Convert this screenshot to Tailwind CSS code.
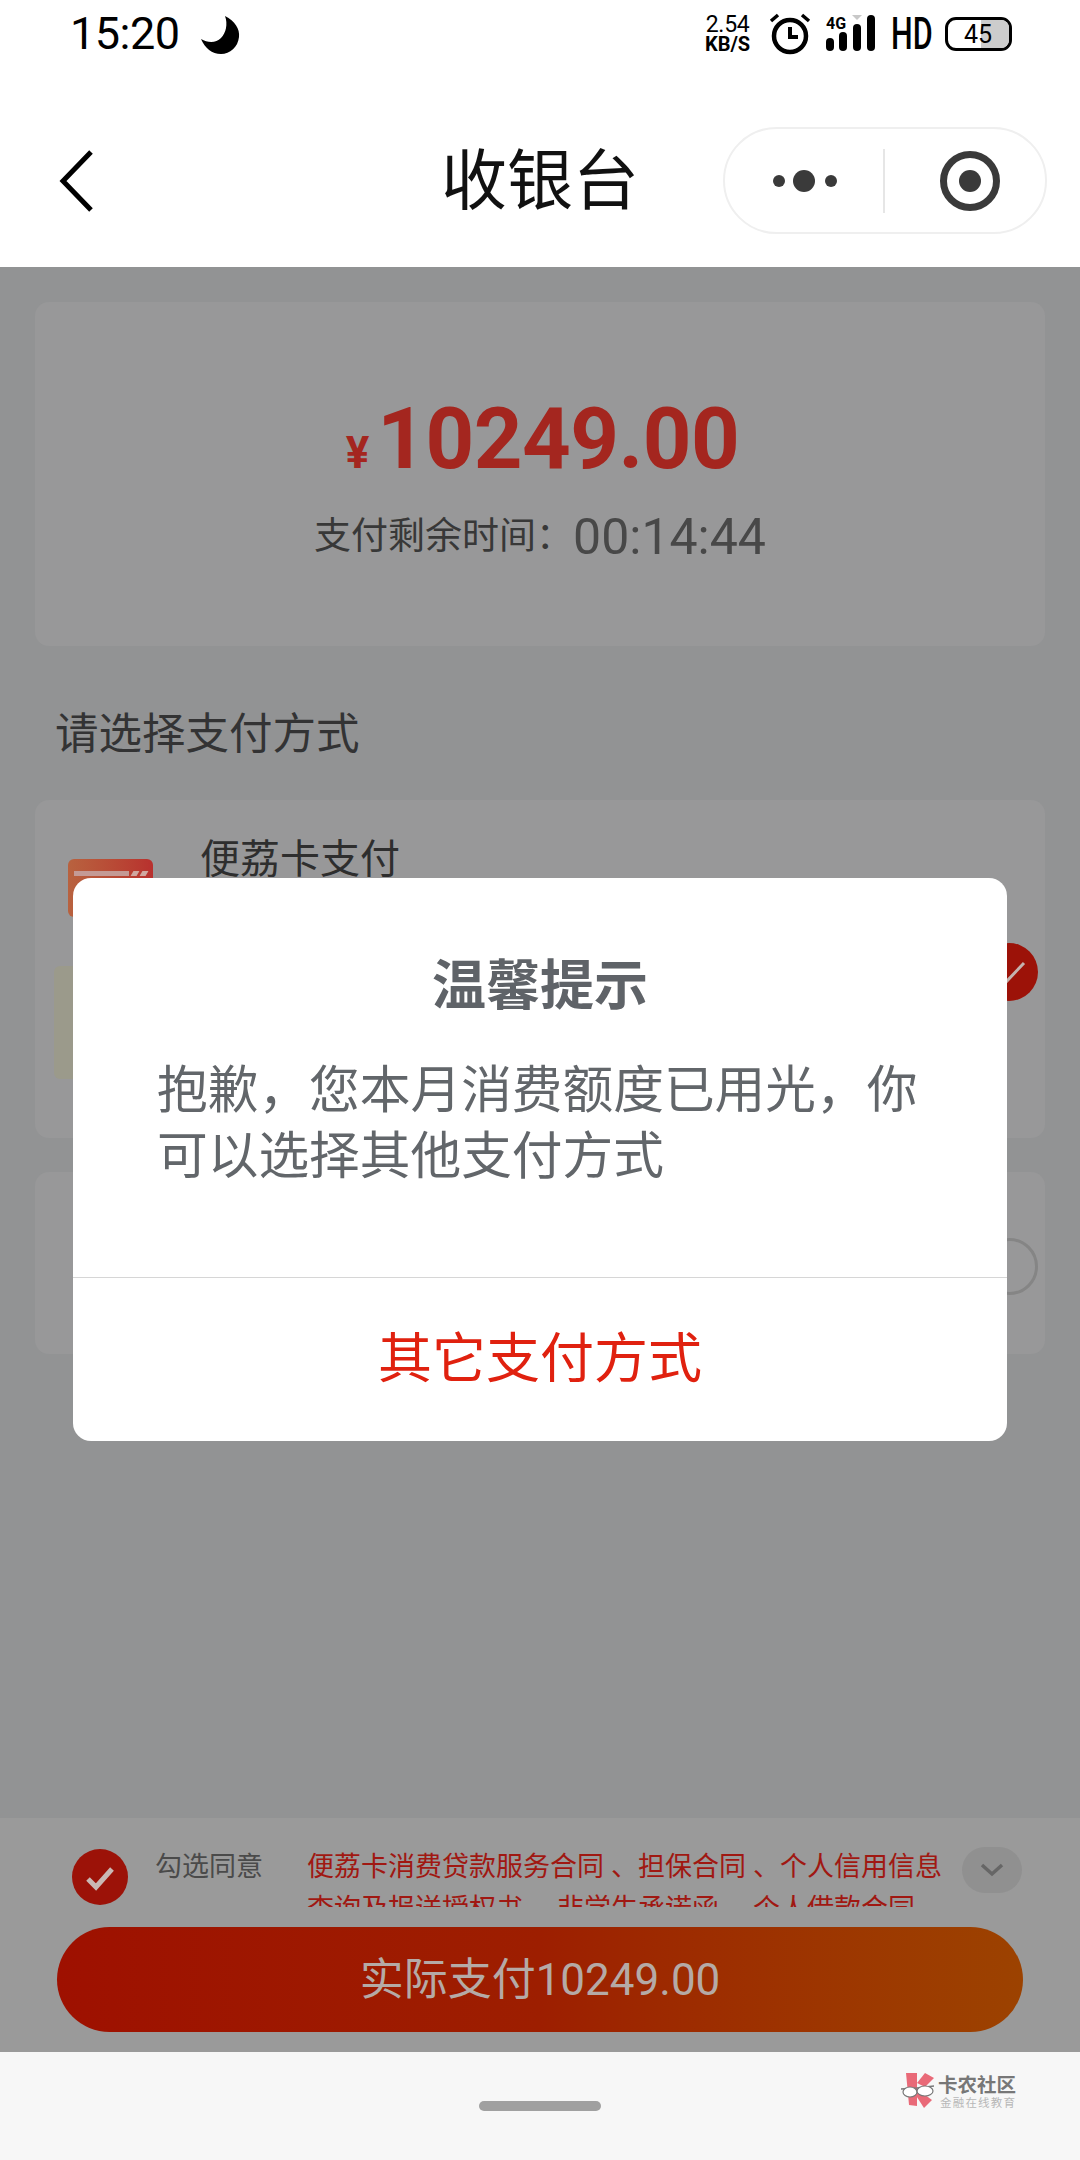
<!DOCTYPE html>
<html lang="zh-CN">
<head>
    <meta charset="UTF-8">
    <meta name="viewport" content="width=device-width, initial-scale=1.0">
    <title>收银台</title>
    <script src="https://cdn.jsdelivr.net/npm/@tailwindcss/browser@4"></script>
</head>
<body class="font-['Roboto','Noto_Sans_CJK_SC',sans-serif]">
<div class="relative flex flex-col w-[1080px] h-[2160px] overflow-hidden bg-white">

    <!-- Status bar -->
    <div class="flex items-center h-[68px] shrink-0 pl-[70px] text-black">
        <span class="text-[45px] leading-[68px] tracking-[-0.5px]">15:20</span>
        <svg class="ml-[20px] mt-[1px]" width="40" height="40" viewBox="0 0 40 40"><path d="M25 1 C35 6 40 14 39 22 C38 32 30 39 21 39 C12 39 5 33 1 24 C8 28 16 28 21 23 C26 18 28 9 25 1 Z" fill="#000"/></svg>
        <div class="flex flex-col items-center w-[50px] ml-[463px] leading-none">
            <span class="text-[23px] leading-[20px] tracking-[-0.3px]">2.54</span>
            <span class="text-[20px] leading-[18px] font-bold">KB/S</span>
        </div>
        <svg class="ml-[15px]" width="44" height="44" viewBox="0 0 44 44" fill="none" stroke="#000"><circle cx="22" cy="24" r="16" stroke-width="4.5"/><path d="M22 15 V25 H30" stroke-width="4"/><path d="M3 9 L10 3 M41 9 L34 3" stroke-width="3.5"/></svg>
        <svg class="ml-[14px]" width="52" height="40" viewBox="0 0 52 40"><text x="0" y="15" font-size="16" font-weight="700" font-family="Roboto">4G</text><rect x="0" y="24" width="8" height="13" rx="4"/><rect x="13" y="18" width="8" height="19" rx="4"/><rect x="27" y="10" width="8" height="27" rx="4"/><rect x="41" y="1" width="8" height="36" rx="4"/><path d="M26 1 H36 L31 6 Z" fill="#c8c8c8"/></svg>
        <span class="ml-[13px] w-[40px] text-[45px] leading-[68px] font-medium scale-x-[0.68] origin-left">HD</span>
        <div class="relative flex items-center justify-center ml-[14px] w-[67px] h-[34px] border-[3px] border-black rounded-[11px] overflow-hidden">
            <div class="absolute top-0 bottom-0 right-0 w-[28px] bg-[#cccccc]"></div>
            <span class="relative text-[25px] leading-none">45</span>
        </div>
    </div>

    <!-- Title bar -->
    <div class="relative flex items-center justify-center h-[199px] shrink-0">
        <svg class="absolute left-[58px] top-[81px]" width="38" height="64" viewBox="0 0 38 64" fill="none" stroke="#000" stroke-width="5"><path d="M33 3 L5 32 L33 61"/></svg>
        <span class="text-[66px] leading-[80px] text-[#111] mt-[28px]">收银台</span>
        <div class="absolute left-[723px] top-[59px] flex items-center w-[324px] h-[107px] rounded-full border-2 border-[#efefef]">
            <svg class="ml-[47px]" width="66" height="24" viewBox="0 0 66 24" fill="#3a3a3a"><circle cx="7" cy="12" r="6"/><circle cx="32" cy="12" r="11"/><circle cx="59" cy="12" r="6"/></svg>
            <div class="ml-[45px] w-[2px] h-[64px] bg-[#e6e6e6]"></div>
            <svg class="ml-[54px]" width="62" height="62" viewBox="0 0 62 62"><circle cx="31" cy="31" r="26.5" fill="none" stroke="#3a3a3a" stroke-width="7"/><circle cx="31" cy="31" r="11" fill="#3a3a3a"/></svg>
        </div>
    </div>

    <!-- Page under the dim layer -->
    <div class="flex flex-col flex-1 bg-[#929394]">
        <div class="flex flex-col flex-1 px-[35px] pt-[35px]">
            <div class="flex flex-col items-center w-[1010px] h-[344px] rounded-[14px] bg-[#989899]">
                <div class="flex items-baseline mt-[92px] ml-[5px] leading-[90px] text-[#a4261f] font-bold">
                    <span class="text-[44px]">¥</span>
                    <span class="ml-[8px] text-[85px] tracking-[-0.5px]">10249.00</span>
                </div>
                <div class="flex items-center mt-[11px] h-[56px]">
                    <span class="text-[37px] text-[#383838]">支付剩余时间：</span>
                    <span class="text-[50px] text-[#484848]">00:14:44</span>
                </div>
            </div>

            <div class="mt-[67px] ml-[20px] text-[43.5px] leading-[44px] text-[#333334]">请选择支付方式</div>

            <div class="relative mt-[43px] w-[1010px] h-[338px] pt-[40px] rounded-[14px] bg-[#989899]">
                <div class="flex pl-[33px]">
                    <div class="flex flex-col w-[85px] h-[58px] mt-[19px] pt-[12px] px-[6px] rounded-[6px] bg-gradient-to-r from-[#b8623f] to-[#b8302e]">
                        <div class="flex gap-[3px] h-[5px]">
                            <div class="flex-1 bg-[#c49a95]"></div>
                            <div class="w-[6px] bg-[#d0a8a0] -skew-x-[30deg]"></div>
                            <div class="w-[6px] bg-[#d0a8a0] -skew-x-[30deg]"></div>
                        </div>
                    </div>
                    <span class="ml-[47px] text-[40px] leading-[40px] text-[#2e2e2e]">便荔卡支付</span>
                </div>
                <div class="mt-[49px] ml-[19px] w-[300px] h-[113px] rounded-[6px] bg-[#9b9a8b]"></div>
                <svg class="absolute left-[945px] top-[143px]" width="58" height="58" viewBox="0 0 58 58"><circle cx="29" cy="29" r="29" fill="#9c1208"/><path d="M15 30 L25 40 L44 20" fill="none" stroke="#c4b2ae" stroke-width="3"/></svg>
            </div>

            <div class="relative mt-[34px] w-[1010px] h-[182px] rounded-[14px] bg-[#989899]">
                <div class="absolute left-[946px] top-[66px] w-[57px] h-[57px] rounded-full border-[3px] border-[#858585]"></div>
            </div>
        </div>

        <!-- Agreement and pay button -->
        <div class="flex flex-col shrink-0 h-[234px] pt-[28px] bg-[#9a9a9a]">
            <div class="flex items-start pl-[72px]">
                <svg class="mt-[3px] shrink-0" width="56" height="56" viewBox="0 0 56 56"><circle cx="28" cy="28" r="28" fill="#9c1208"/><path d="M16 30 L24 38 L40 20" fill="none" stroke="#c9b8b4" stroke-width="5"/></svg>
                <span class="ml-[27px] w-[152px] shrink-0 text-[27px] leading-[42px] text-[#4a4a4a]">勾选同意</span>
                <div class="w-[655px] h-[61px] shrink-0 overflow-hidden text-[27px] leading-[42px] text-[#a01812] whitespace-nowrap">
                    <div><span>便荔卡消费贷款服务合同</span><span class="ml-[7px]">、</span><span>担保合同</span><span class="ml-[7px]">、</span><span>个人信用信息</span></div>
                    <div><span>查询及报送授权书</span><span class="ml-[7px]">、</span><span>非学生承诺函</span><span class="ml-[7px]">、</span><span>个人借款合同</span></div>
                </div>
                <div class="flex items-center justify-center w-[60px] h-[46px] mt-[1px] rounded-full bg-[#909090]">
                    <svg width="24" height="14" viewBox="0 0 24 14" fill="none" stroke="#666" stroke-width="3.5"><path d="M2 2 L12 11 L22 2"/></svg>
                </div>
            </div>
            <div class="flex items-center justify-center w-[966px] h-[105px] mt-[20px] ml-[57px] rounded-full bg-gradient-to-r from-[#9e1000] via-[#9d1e00] to-[#9c4200] text-[#b5aaa6] text-[44px]">实际支付10249.00</div>
        </div>
    </div>

    <!-- Gesture bar -->
    <div class="relative flex justify-center h-[108px] shrink-0 pt-[49px] bg-[#f7f7f7]">
        <div class="w-[122px] h-[10px] rounded-full bg-[#a0a0a0]"></div>
        <div class="absolute left-[900px] top-[21px] flex items-start">
            <svg width="36" height="36" viewBox="0 0 36 36">
                <path d="M6 0 H17 V33 L9 32 Z" fill="#e96a78"/>
                <path d="M17 10 L25 0 L34 5 L25 14 Z" fill="#e96a78"/>
                <path d="M17 16 L32 27 L24 35 L15 21 Z" fill="#e96a78"/>
                <path d="M1 16 L17 15 L34 13" fill="none" stroke="#777" stroke-width="1.5"/>
                <ellipse cx="10" cy="19" rx="7" ry="5" fill="#fff" stroke="#777" stroke-width="1.2"/>
                <ellipse cx="25" cy="18" rx="8" ry="5" fill="#fff" stroke="#777" stroke-width="1.2"/>
            </svg>
            <div class="flex flex-col ml-[2px] mt-[3px]">
                <span class="text-[19.5px] leading-[20px] font-bold text-[#777777]">卡农社区</span>
                <span class="ml-[2px] text-[11.5px] leading-[14px] tracking-[1.2px] text-[#b8b8b8]">金融在线教育</span>
            </div>
        </div>
    </div>

    <!-- Dialog -->
    <div class="absolute left-[73px] top-[878px] flex flex-col w-[934px] h-[563px] rounded-[18px] bg-white">
        <div class="pt-[79px] text-center text-[54px] leading-[60px] font-bold text-[#5f6368]">温馨提示</div>
        <div class="mt-[41px] pl-[84px] pr-[76px] text-[50.7px] leading-[66px] text-[#62666a]">抱歉，您本月消费额度已用光，你可以选择其他支付方式</div>
        <div class="flex items-center justify-center mt-auto h-[164px] border-t border-[#d6d6d6] text-[54px] text-[#e0210f]">其它支付方式</div>
    </div>
</div>
</body>
</html>
